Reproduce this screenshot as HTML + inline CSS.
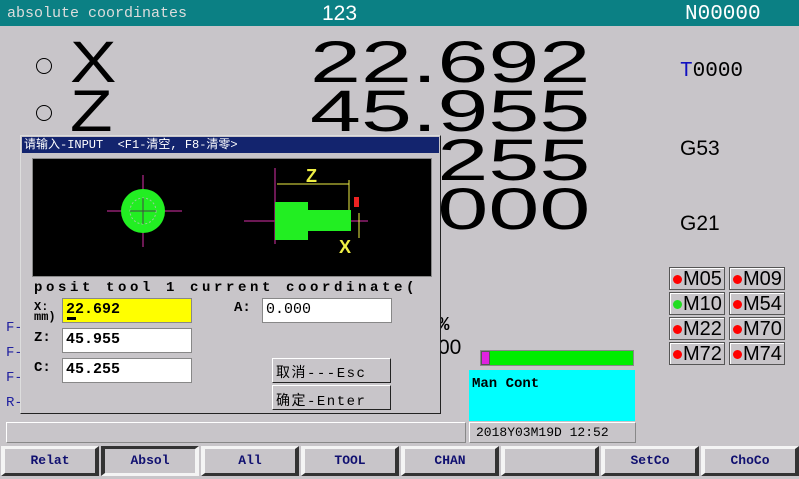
<!DOCTYPE html>
<html><head><meta charset="utf-8"><style>
*{margin:0;padding:0;box-sizing:border-box}
body{width:799px;height:479px;background:#c8c5c9;position:relative;overflow:hidden;font-family:"Liberation Mono","Noto Sans CJK SC",monospace}
.a{position:absolute;white-space:pre}
.top{left:0;top:0;width:799px;height:26px;background:#0b8084}
.big{font-family:"Liberation Sans",sans-serif;font-size:58px;line-height:50px;color:#000;transform-origin:0 0;letter-spacing:0}
.circ{width:16px;height:16px;border:1px solid #000;border-radius:50%}
.fld{background:#fff;border:1px solid #888;font-size:15px;font-weight:bold;padding:2px 0 0 3px;height:25px;width:130px}
.lbl{font-size:14px;font-weight:bold}
.m{width:56px;height:23px;border:1px solid #555;background:#c8c5c9;box-shadow:inset 1px 1px #fff;font-family:"Liberation Sans",sans-serif;font-size:20px;line-height:22px;padding-left:13px;transform-origin:0 0}
.m i{position:absolute;left:3px;top:7px;width:9px;height:9px;border-radius:50%;background:#f00}
.btn{top:446px;height:30px;width:98px;background:#c8c5c9;border-top:3px solid #f4f4f4;border-left:4px solid #f4f4f4;border-bottom:3px solid #333;border-right:4px solid #333;font-size:13px;font-weight:bold;color:#101070;text-align:center;line-height:24px}
</style></head><body>
<div class="a top"></div>
<div class="a" style="left:7px;top:5px;font-size:15px;color:#ddd">absolute coordinates</div>
<div class="a" style="left:322px;top:2px;font-size:21px;color:#fff;font-family:'Liberation Sans',sans-serif">123</div>
<div class="a" style="left:685px;top:3px;font-size:21px;color:#fff">N00000</div>

<div class="a circ" style="left:36px;top:58px"></div>
<div class="a circ" style="left:36px;top:105px"></div>
<div class="a big" style="left:70px;top:38px;transform:scaleX(1.2)">X</div>
<div class="a big" style="left:70px;top:87px;transform:scaleX(1.2)">Z</div>
<div class="a big" style="left:310px;top:38px;transform:scaleX(1.58)">22.692</div>
<div class="a big" style="left:310px;top:87px;transform:scaleX(1.58)">45.955</div>
<div class="a big" style="left:310px;top:136px;transform:scaleX(1.58)">45.255</div>
<div class="a big" style="left:310px;top:185px;transform:scaleX(1.58)">00.000</div>

<div class="a" style="left:680px;top:60px;font-size:21px"><span style="color:#1010c0">T</span>0000</div>
<div class="a" style="left:680px;top:137px;font-size:21px;font-family:'Liberation Sans',sans-serif">G53</div>
<div class="a" style="left:680px;top:212px;font-size:21px;font-family:'Liberation Sans',sans-serif">G21</div>

<div class="a m" style="left:669px;top:267px"><i></i>M05</div>
<div class="a m" style="left:729px;top:267px"><i></i>M09</div>
<div class="a m" style="left:669px;top:292px"><i style="background:#2d2"></i>M10</div>
<div class="a m" style="left:729px;top:292px"><i></i>M54</div>
<div class="a m" style="left:669px;top:317px"><i></i>M22</div>
<div class="a m" style="left:729px;top:317px"><i></i>M70</div>
<div class="a m" style="left:669px;top:342px"><i></i>M72</div>
<div class="a m" style="left:729px;top:342px"><i></i>M74</div>

<div class="a" style="left:6px;top:316px;font-size:14px;color:#2020a0;line-height:25px">F-<br>F-<br>F-<br>R-</div>
<div class="a" style="left:438px;top:314px;font-size:19px;font-weight:bold">%</div>
<div class="a" style="left:438px;top:336px;font-size:21px;font-family:'Liberation Sans',sans-serif">00</div>

<div class="a" style="left:480px;top:350px;width:154px;height:16px;background:#0e0;border:1px solid #888"></div>
<div class="a" style="left:481px;top:351px;width:9px;height:14px;background:#e020e0;border:1px solid #555"></div>
<div class="a" style="left:469px;top:370px;width:166px;height:51px;background:#0ff"></div>
<div class="a" style="left:472px;top:376px;font-size:14px;font-weight:bold">Man Cont</div>
<div class="a" style="left:469px;top:422px;width:167px;height:21px;border:1px solid #fff;border-right-color:#888;border-bottom-color:#888"></div>
<div class="a" style="left:476px;top:425px;font-size:13px">2018Y03M19D 12:52</div>
<div class="a" style="left:6px;top:422px;width:460px;height:21px;border:1px solid #fff;border-right-color:#888;border-bottom-color:#888"></div>

<div class="a" style="left:20px;top:135px;width:421px;height:279px;background:#c8c5c9;border:1px solid #222;border-top-color:#ddd;border-left-color:#ddd"></div>
<div class="a" style="left:22px;top:137px;width:417px;height:16px;background:#13246e"></div>
<div class="a" style="left:24px;top:137px;font-size:12px;color:#fff;line-height:16px">请输入-INPUT  &lt;F1-清空, F8-清零&gt;</div>
<div class="a" style="left:32px;top:158px;width:400px;height:119px;background:#000;border:1px solid #888"></div>
<svg class="a" style="left:32px;top:158px" width="400" height="119">
<line x1="75" y1="53" x2="150" y2="53" stroke="#902070" stroke-width="1.5"/>
<line x1="111" y1="17" x2="111" y2="89" stroke="#902070" stroke-width="1.5"/>
<circle cx="111" cy="53" r="22" fill="#22ee22"/>
<circle cx="111" cy="53" r="13" fill="none" stroke="#9c9" stroke-dasharray="2 2"/>
<line x1="98" y1="53" x2="124" y2="53" stroke="#444"/>
<line x1="111" y1="40" x2="111" y2="66" stroke="#444"/>
<line x1="212" y1="63" x2="336" y2="63" stroke="#902070" stroke-width="1.5"/>
<line x1="243" y1="10" x2="243" y2="86" stroke="#902070" stroke-width="1.5"/>
<rect x="243" y="44" width="33" height="38" fill="#22ee22"/>
<rect x="276" y="52" width="43" height="21" fill="#22ee22"/>
<line x1="245" y1="26" x2="317" y2="26" stroke="#ee4"/>
<line x1="317" y1="22" x2="317" y2="52" stroke="#ee4"/>
<line x1="327" y1="80" x2="327" y2="55" stroke="#ee4"/>
<text x="274" y="24" fill="#ee4" font-family="Liberation Sans" font-weight="bold" font-size="18">Z</text>
<text x="307" y="95" fill="#ee4" font-family="Liberation Sans" font-weight="bold" font-size="18">X</text>
<rect x="322" y="39" width="5" height="10" fill="#e22"/>
</svg>
<div class="a" style="left:34px;top:280px;font-size:14px;font-weight:bold;letter-spacing:3.6px">posit tool 1 current coordinate(</div>
<div class="a lbl" style="left:34px;top:302px;font-size:12px;line-height:10px">X:<br>mm)</div>
<div class="a fld" style="left:62px;top:298px;background:#ff0">22.692</div>
<div class="a" style="left:67px;top:317px;width:9px;height:3px;background:#000"></div>
<div class="a lbl" style="left:34px;top:330px">Z:</div>
<div class="a fld" style="left:62px;top:328px">45.955</div>
<div class="a lbl" style="left:34px;top:360px">C:</div>
<div class="a fld" style="left:62px;top:358px">45.255</div>
<div class="a lbl" style="left:234px;top:300px">A:</div>
<div class="a fld" style="left:262px;top:298px;font-weight:normal">0.000</div>
<div class="a" style="left:272px;top:358px;width:119px;height:25px;border:1px solid #fff;border-right-color:#222;border-bottom-color:#222;font-size:14px;padding:3px 0 0 3px;letter-spacing:1.5px">取消---Esc</div>
<div class="a" style="left:272px;top:385px;width:119px;height:25px;border:1px solid #fff;border-right-color:#222;border-bottom-color:#222;font-size:14px;padding:4px 0 0 3px;letter-spacing:1.5px">确定-Enter</div>

<div class="a btn" style="left:1px">Relat</div>
<div class="a btn" style="left:101px;border-top-color:#333;border-left-color:#333;border-bottom-color:#f4f4f4;border-right-color:#f4f4f4">Absol</div>
<div class="a btn" style="left:201px">All</div>
<div class="a btn" style="left:301px">TOOL</div>
<div class="a btn" style="left:401px">CHAN</div>
<div class="a btn" style="left:501px"></div>
<div class="a btn" style="left:601px">SetCo</div>
<div class="a btn" style="left:701px">ChoCo</div>
</body></html>
